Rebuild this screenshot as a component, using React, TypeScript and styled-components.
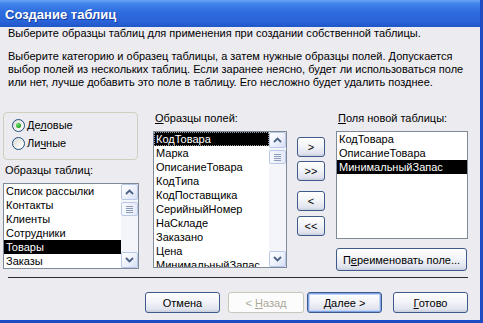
import React from 'react';
import styled, { createGlobalStyle } from 'styled-components';

const GlobalStyle = createGlobalStyle`
  html, body {
    margin: 0;
    padding: 0;
    background: #ecebf0;
  }
  body {
    font-family: "Liberation Sans", Arial, sans-serif;
    font-size: 11px;
    color: #000;
  }
`;

const tables = ['Список рассылки', 'Контакты', 'Клиенты', 'Сотрудники', 'Товары', 'Заказы'];
const fields = [
  'КодТовара',
  'Марка',
  'ОписаниеТовара',
  'КодТипа',
  'КодПоставщика',
  'СерийныйНомер',
  'НаСкладе',
  'Заказано',
  'Цена',
  'МинимальныйЗапас',
];
const newFields = ['КодТовара', 'ОписаниеТовара', 'МинимальныйЗапас'];

const Arrow: React.FC<{ up?: boolean }> = ({ up }) => (
  <svg width="9" height="6" viewBox="0 0 9 6">
    <path
      d={up ? 'M1 5 L4.5 1.5 L8 5' : 'M1 1 L4.5 4.5 L8 1'}
      fill="none"
      stroke="#4d6185"
      strokeWidth="1.8"
    />
  </svg>
);

const ScrollBar: React.FC = () => (
  <Scroll>
    <ScrollBtn>
      <Arrow up />
    </ScrollBtn>
    <Track>
      <Thumb>
        <Grip />
      </Thumb>
    </Track>
    <ScrollBtn>
      <Arrow />
    </ScrollBtn>
  </Scroll>
);

interface ListProps {
  items: string[];
  selected: number;
  focused?: boolean;
  scroll?: boolean;
  height: number;
}

const List: React.FC<ListProps> = ({ items, selected, focused, scroll, height }) => (
  <ListBox $height={height}>
    <Items>
      {items.map((it, i) => (
        <Item key={it} $selected={i === selected} $focused={focused && i === selected}>
          {it}
        </Item>
      ))}
    </Items>
    {scroll && <ScrollBar />}
  </ListBox>
);

const App: React.FC = () => (
  <>
    <GlobalStyle />
    <Window>
      <TitleBar>Создание таблиц</TitleBar>
      <Header>Выберите образцы таблиц для применения при создании собственной таблицы.</Header>
      <Intro>
        Выберите категорию и образец таблицы, а затем нужные образцы полей. Допускается
        <br />
        выбор полей из нескольких таблиц. Если заранее неясно, будет ли использоваться поле
        <br />
        или нет, лучше добавить это поле в таблицу. Его несложно будет удалить позднее.
      </Intro>

      <Main>
        <LeftCol>
          <GroupBox>
            <RadioRow>
              <Radio $checked />
              <span>
                Де<u>л</u>овые
              </span>
            </RadioRow>
            <RadioRow>
              <Radio />
              <span>
                Ли<u>ч</u>ные
              </span>
            </RadioRow>
          </GroupBox>
          <Label $top={3}>Образцы таблиц:</Label>
          <List items={tables} selected={4} scroll height={86} />
        </LeftCol>

        <MidCol>
          <Label>
            <u>О</u>бразцы полей:
          </Label>
          <List items={fields} selected={0} focused scroll height={137} />
        </MidCol>

        <MoveCol>
          <Button $w={28} $h={20}>&gt;</Button>
          <Button $w={28} $h={20} $gap={4}>&gt;&gt;</Button>
          <Button $w={28} $h={20} $gap={10}>&lt;</Button>
          <Button $w={28} $h={20} $gap={5}>&lt;&lt;</Button>
        </MoveCol>

        <RightCol>
          <Label>
            <u>П</u>оля новой таблицы:
          </Label>
          <List items={newFields} selected={2} height={108} />
          <Button $w={131} $h={23} $gap={9}>
            П<u>е</u>реименовать поле...
          </Button>
        </RightCol>
      </Main>

      <Separator />

      <Footer>
        <Button $w={75} $h={21}>Отмена</Button>
        <Button $w={76} $h={21} $left={8} disabled>
          &lt; <u>Н</u>азад
        </Button>
        <Button $w={75} $h={21} $left={3} $default>
          <u>Д</u>алее &gt;
        </Button>
        <Button $w={75} $h={21} $left={11}>
          <u>Г</u>отово
        </Button>
      </Footer>
    </Window>
  </>
);

const Window = styled.div`
  width: 480px;
  height: 320px;
  border-right: 3px solid #1d4cc2;
  border-bottom: 3px solid #1d4cc2;
  background: #ecebf0;
  display: flex;
  flex-direction: column;
  overflow: hidden;
`;

const TitleBar = styled.div`
  height: 27px;
  flex: none;
  box-sizing: border-box;
  padding: 7px 0 0 5px;
  background: linear-gradient(180deg, #6aa6f6 0%, #3f84ea 14%, #2d6cde 45%, #2963d8 80%, #2056c8 100%);
  color: #fff;
  font-size: 13px;
  font-weight: bold;
  line-height: 16px;
  text-shadow: 1px 1px 0 #143a9c;
`;

const Header = styled.div`
  padding-left: 8px;
  line-height: 13px;
`;

const Intro = styled.div`
  margin-top: 10px;
  padding-left: 8px;
  line-height: 13px;
`;

const Main = styled.div`
  display: flex;
  margin-top: 22px;
  padding-left: 3px;
  height: 161px;
`;

const LeftCol = styled.div`
  width: 136px;
  display: flex;
  flex-direction: column;
`;

const MidCol = styled.div`
  width: 134px;
  margin-left: 14px;
  display: flex;
  flex-direction: column;
`;

const MoveCol = styled.div`
  width: 28px;
  margin-left: 10px;
  padding-top: 26px;
  display: flex;
  flex-direction: column;
`;

const RightCol = styled.div`
  width: 132px;
  margin-left: 11px;
  display: flex;
  flex-direction: column;
`;

const GroupBox = styled.div`
  margin-top: 1px;
  height: 48px;
  width: 135px;
  box-sizing: border-box;
  border: 1px solid #d0d0bf;
  border-radius: 4px;
  padding: 3px 0 0 8px;
`;

const RadioRow = styled.div`
  height: 18px;
  display: flex;
  align-items: center;
  gap: 2px;
`;

const Radio = styled.span<{ $checked?: boolean }>`
  width: 13px;
  height: 13px;
  box-sizing: border-box;
  border-radius: 50%;
  border: 1px solid #1c5180;
  background: linear-gradient(135deg, #dcdcd5 0%, #f4f4f0 60%, #ffffff 100%);
  display: flex;
  align-items: center;
  justify-content: center;

  &::after {
    content: '';
    display: ${p => (p.$checked ? 'block' : 'none')};
    width: 5px;
    height: 5px;
    border-radius: 50%;
    background: radial-gradient(circle at 35% 35%, #6ee06e, #21a121 70%);
  }
`;

const Label = styled.div<{ $top?: number }>`
  margin-top: ${p => p.$top || 0}px;
  padding-left: 2px;
  line-height: 14px;
  height: 14px;
  margin-bottom: 6px;
  white-space: nowrap;
`;

const ListBox = styled.div<{ $height: number }>`
  height: ${p => p.$height}px;
  box-sizing: border-box;
  border: 1px solid #7f8a99;
  background: #fff;
  display: flex;
  overflow: hidden;
`;

const Items = styled.div`
  flex: 1;
  min-width: 0;
  overflow: hidden;
`;

const Item = styled.div<{ $selected?: boolean; $focused?: boolean }>`
  height: 14px;
  line-height: 14px;
  padding-left: 2px;
  white-space: nowrap;
  overflow: hidden;
  background: ${p => (p.$selected ? '#000' : 'transparent')};
  color: ${p => (p.$selected ? '#fff' : '#000')};
  outline: ${p => (p.$focused ? '1px dotted #9a9a9a' : 'none')};
  outline-offset: -1px;
`;

const Scroll = styled.div`
  width: 17px;
  flex: none;
  display: flex;
  flex-direction: column;
  background: #f3f5fb;
`;

const ScrollBtn = styled.div`
  height: 16px;
  flex: none;
  box-sizing: border-box;
  border: 1px solid #b9c8e8;
  border-radius: 2px;
  background: linear-gradient(135deg, #ffffff 0%, #eef2fb 50%, #d6e0f4 100%);
  display: flex;
  align-items: center;
  justify-content: center;
`;

const Track = styled.div`
  flex: 1;
  padding-top: 2px;
`;

const Thumb = styled.div`
  height: 14px;
  box-sizing: border-box;
  border: 1px solid #b9c8e8;
  border-radius: 2px;
  background: linear-gradient(90deg, #f6f8fd, #e4eaf7);
  display: flex;
  align-items: center;
  justify-content: center;
`;

const Grip = styled.div`
  width: 7px;
  height: 7px;
  background: repeating-linear-gradient(180deg, #8e9bb8 0 1px, transparent 1px 2px);
`;

const Button = styled.button<{ $w: number; $h: number; $gap?: number; $left?: number; $default?: boolean }>`
  width: ${p => p.$w}px;
  height: ${p => p.$h}px;
  flex: none;
  margin-top: ${p => p.$gap || 0}px;
  margin-left: ${p => p.$left || 0}px;
  padding: 0;
  box-sizing: border-box;
  font-family: "Liberation Sans", Arial, sans-serif;
  font-size: 11px;
  color: #000;
  border: 1px solid #3d5a8a;
  border-radius: 3px;
  background: linear-gradient(180deg, #ffffff 0%, #f3f4f8 45%, #e1e4ee 85%, #c9cedd 100%);
  box-shadow: ${p => (p.$default ? 'inset 0 0 0 1px #7ea2e6, inset 0 0 0 2px #c4d4f4' : 'none')};
  white-space: nowrap;

  &:disabled {
    border-color: #c9c7ba;
    background: #fcfcfc;
    color: #aca899;
  }
`;

const Separator = styled.div`
  margin: 5px 12px 0 8px;
  height: 1px;
  background: #2b2b2b;
`;

const Footer = styled.div`
  display: flex;
  justify-content: flex-end;
  padding-right: 12px;
  margin-top: 14px;
`;

export default App;
